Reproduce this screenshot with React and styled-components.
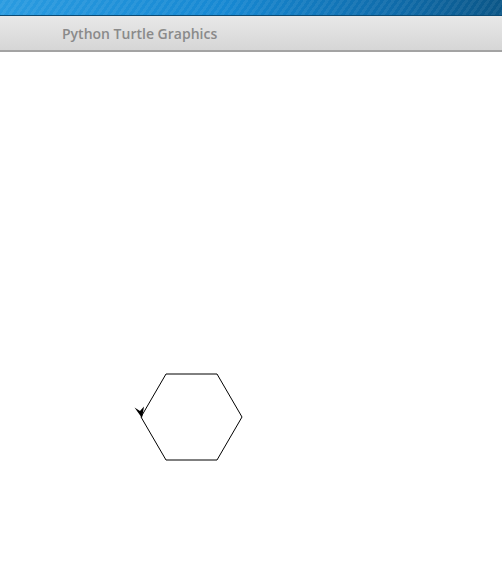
import styled, { createGlobalStyle } from "styled-components";

const Global = createGlobalStyle`
  html, body { margin: 0; padding: 0; background: #ffffff; }
  body { width: 502px; height: 584px; overflow: hidden; }
`;

const Window = styled.div`
  width: 502px;
  height: 584px;
  display: flex;
  flex-direction: column;
  background: #ffffff;
`;

const TopStripe = styled.div`
  height: 15px;
  flex: none;
  background:
    repeating-linear-gradient(
      -55deg,
      rgba(255, 255, 255, 0.06) 0px,
      rgba(255, 255, 255, 0.06) 3px,
      rgba(0, 0, 0, 0) 3px,
      rgba(0, 0, 0, 0) 6px
    ),
    linear-gradient(to right, #2a9be0 0%, #1788d2 45%, #0f6aa8 80%, #0b5687 100%);
  border-bottom: 1px solid #0b4a73;
`;

const TitleBar = styled.div`
  height: 36px;
  flex: none;
  box-sizing: border-box;
  display: flex;
  align-items: center;
  padding-left: 62px;
  background: linear-gradient(to bottom, #e8e8e8, #d6d6d6);
  border-bottom: 2px solid #a3a3a3;
`;

const Title = styled.span`
  font-family: "Open Sans", "DejaVu Sans", sans-serif;
  font-weight: 600;
  font-size: 14px;
  color: #8a8a8a;
`;

const Canvas = styled.div`
  flex: 1;
  background: #ffffff;
`;

const Drawing = styled.svg`
  display: block;
`;

function App() {
  return (
    <Window>
      <Global />
      <TopStripe />
      <TitleBar>
        <Title>Python Turtle Graphics</Title>
      </TitleBar>
      <Canvas>
        <Drawing width="502" height="532" viewBox="0 52 502 532">
          <polygon
            points="166,374 217,374 242,417 217,460 166,460 141,417"
            fill="none"
            stroke="#000"
            strokeWidth="1"
          />
          <polygon points="142,418 134.5,407.5 140,411 144,406.5" fill="#000" />
        </Drawing>
      </Canvas>
    </Window>
  );
}

export default App;
